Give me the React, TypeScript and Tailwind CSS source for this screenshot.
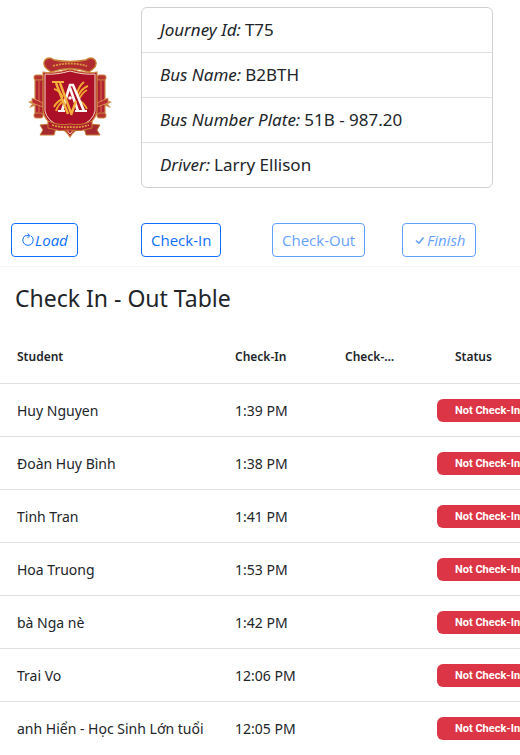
import React from "react";

const students = [
  { name: "Huy Nguyen", checkIn: "1:39 PM" },
  { name: "Đoàn Huy Bình", checkIn: "1:38 PM" },
  { name: "Tinh Tran", checkIn: "1:41 PM" },
  { name: "Hoa Truong", checkIn: "1:53 PM" },
  { name: "bà Nga nè", checkIn: "1:42 PM" },
  { name: "Trai Vo", checkIn: "12:06 PM" },
  { name: "anh Hiển - Học Sinh Lớn tuổi", checkIn: "12:05 PM" },
];

const journey = [
  { label: "Journey Id:", value: "T75" },
  { label: "Bus Name:", value: "B2BTH" },
  { label: "Bus Number Plate:", value: "51B - 987.20" },
  { label: "Driver:", value: "Larry Ellison" },
];

const buttonClass =
  "inline-flex h-[34px] items-center rounded border border-[#0d6efd] px-[9px] font-['Open_Sans',sans-serif] text-[15px] whitespace-nowrap text-[#0d6efd] disabled:opacity-65";

function Scroll() {
  return (
    <g>
      <path d="M8 42 L0 45 L4 47 L1 51 L9 48 Z" fill="#cf8a4a" />
      <rect x="7" y="21" width="9" height="37" rx="2" fill="#b0222f" stroke="#cc8a48" strokeWidth="1.2" />
      <path d="M11 24 V55" stroke="#d25a45" strokeWidth="1.4" />
      <rect x="6" y="18" width="9" height="5" rx="2" fill="#b5322f" stroke="#cc8a48" />
      <path d="M4 41 L15 46 V50 L4 46 Z" fill="#b92c30" stroke="#d9a257" strokeWidth=".8" />
      <rect x="6" y="56" width="9" height="5" rx="2" fill="#b5322f" stroke="#cc8a48" />
    </g>
  );
}

function Crest() {
  return (
    <svg width="84" height="82" viewBox="0 0 84 82" role="img" aria-label="School crest">
      <Scroll />
      <g transform="translate(84 0) scale(-1 1)">
        <Scroll />
      </g>
      <path d="M15 15 Q26 17 42 12 Q58 17 69 15 V54 Q67 66 53 71 Q46 73 42 80 Q38 73 31 71 Q17 66 15 54 Z" fill="#ac1028" stroke="#cf8a42" strokeWidth="1.2" />
      <path d="M17 17 Q28 18 42 14 Q56 18 67 17 V54 Q65 64 52 69 Q45 71 42 77 Q39 71 32 69 Q19 64 17 54 Z" fill="none" stroke="#f4dfbd" strokeWidth="1" />
      <path d="M19 12 Q14 8 17 3 Q21 -1 26 3 Q42 6 58 3 Q63 -1 67 3 Q70 8 65 12 L61 15 Q42 8 23 15 Z" fill="#b12c30" stroke="#ca8034" strokeWidth="1.3" />
      <path d="M25 9 Q42 4 59 9" fill="none" stroke="#dd9a3f" strokeWidth="1.8" strokeDasharray="2 1" />
      <g fill="none" stroke="#f0a92e" strokeWidth="1.9">
        <path d="M26 32 Q31 33 35 40" />
        <path d="M28 54 Q30 47 36 44 M26 50 Q29 44 35 42" />
        <path d="M60 29 Q54 31 50 39 M59 33 Q55 35 51 42 M56 25 Q51 29 49 36" />
        <path d="M59 52 Q56 46 52 44" />
      </g>
      <path d="M34 54 L42 28 H45 L56 54 M50 54 L42 31" fill="none" stroke="#fff7f4" strokeWidth="2.6" />
      <path d="M30 54 H37 M47 54 H59" stroke="#fff7f4" strokeWidth="2" />
      <path d="M28 26 L40 57 M32 26 L43 56 M43 58 L48 44" fill="none" stroke="#f2b23b" strokeWidth="2.4" />
      <path d="M24 25 H36" stroke="#f2b23b" strokeWidth="2" />
      <circle cx="42" cy="41" r="1.8" fill="#fff" />
      <path d="M21 67 L12 68 L15 73 L12 78 H26 L28 71 Z M63 67 L72 68 L69 73 L72 78 H58 L56 71 Z" fill="#a52a30" stroke="#c77a34" />
      <path d="M20 64 Q31 69 42 67 Q53 69 64 64 V71 Q53 75 42 73 Q31 75 20 71 Z" fill="#ad1c2c" stroke="#c77a34" />
      <path d="M24 68 Q34 71 42 70 Q52 71 61 68" fill="none" stroke="#dd9a3f" strokeWidth="1.8" strokeDasharray="2 1" />
    </svg>
  );
}

export default function App() {
  return (
    <main className="min-h-screen overflow-hidden bg-white font-['Noto_Sans',sans-serif] text-[#212529]">
      <header className="grid grid-cols-4 pt-[7px]">
        <div className="flex items-center pl-[28px]">
          <Crest />
        </div>
        <ul className="col-span-3 mr-[27px] ml-[11px] divide-y divide-[#dfdfdf] rounded-md border border-[#d0d0d0]">
          {journey.map((item) => (
            <li key={item.label} className="box-content flex h-[44px] items-center gap-1 px-[18px] text-[17px]">
              <em>{item.label}</em>
              <span>{item.value}</span>
            </li>
          ))}
        </ul>
      </header>

      <div className="mt-[35px] grid grid-cols-4 border-b border-[#f1f6fe] pb-[9px]">
        <div className="pl-[11px]">
          <button type="button" className={buttonClass}>
            <svg width="14" height="14" viewBox="0 0 14 14" fill="none" stroke="currentColor" strokeWidth="1" aria-hidden="true">
              <path d="M4.4 2.6 A5.2 5.2 0 1 0 10 2.9 M4 2.7 H8.2 M6.6 .4 L8.8 2.7 L6.6 5" />
            </svg>
            <em>Load</em>
          </button>
        </div>
        <div className="pl-[11px]">
          <button type="button" className={buttonClass}>Check-In</button>
        </div>
        <div className="pl-[12px]">
          <button type="button" disabled className={buttonClass}>Check-Out</button>
        </div>
        <div className="pl-[12px]">
          <button type="button" disabled className={buttonClass}>
            <svg width="15" height="15" viewBox="0 0 15 15" fill="none" stroke="currentColor" strokeWidth="1.6" aria-hidden="true">
              <path d="M4 7.5 L7 10.2 L11.5 4.5" />
            </svg>
            <em>Finish</em>
          </button>
        </div>
      </div>

      <section>
        <h1 className="px-[15px] pt-[15px] text-[23px] leading-8">Check In - Out Table</h1>
        <table className="w-[574px] table-fixed border-collapse text-left text-sm">
          <colgroup>
            <col className="w-[225px]" />
            <col className="w-[110px]" />
            <col className="w-[110px]" />
            <col />
          </colgroup>
          <thead>
            <tr className="h-[69px] border-b border-[#e0e0e0] text-xs">
              <th className="pt-[18px] pl-[17px] font-semibold">Student</th>
              <th className="pt-[18px] pl-[10px] font-semibold">Check-In</th>
              <th className="pt-[18px] pl-[10px] font-semibold">
                <div className="w-[54px] truncate">Check-Out</div>
              </th>
              <th className="pt-[18px] pl-[10px] font-semibold">Status</th>
            </tr>
          </thead>
          <tbody>
            {students.map((student) => (
              <tr key={student.name} className="h-[53px] border-b border-[#e0e0e0] last:border-b-0">
                <td className="pt-[2px] pl-[17px] whitespace-nowrap">{student.name}</td>
                <td className="pt-[2px] pl-[10px]">{student.checkIn}</td>
                <td />
                <td className="pt-[2px]">
                  <div className="-ml-2 flex h-[23px] w-[104px] items-center rounded-md bg-[#dc3545] pl-[18px] font-[Roboto,sans-serif] text-[11px] font-bold whitespace-nowrap text-white">
                    Not Check-In
                  </div>
                </td>
              </tr>
            ))}
          </tbody>
        </table>
      </section>
    </main>
  );
}
